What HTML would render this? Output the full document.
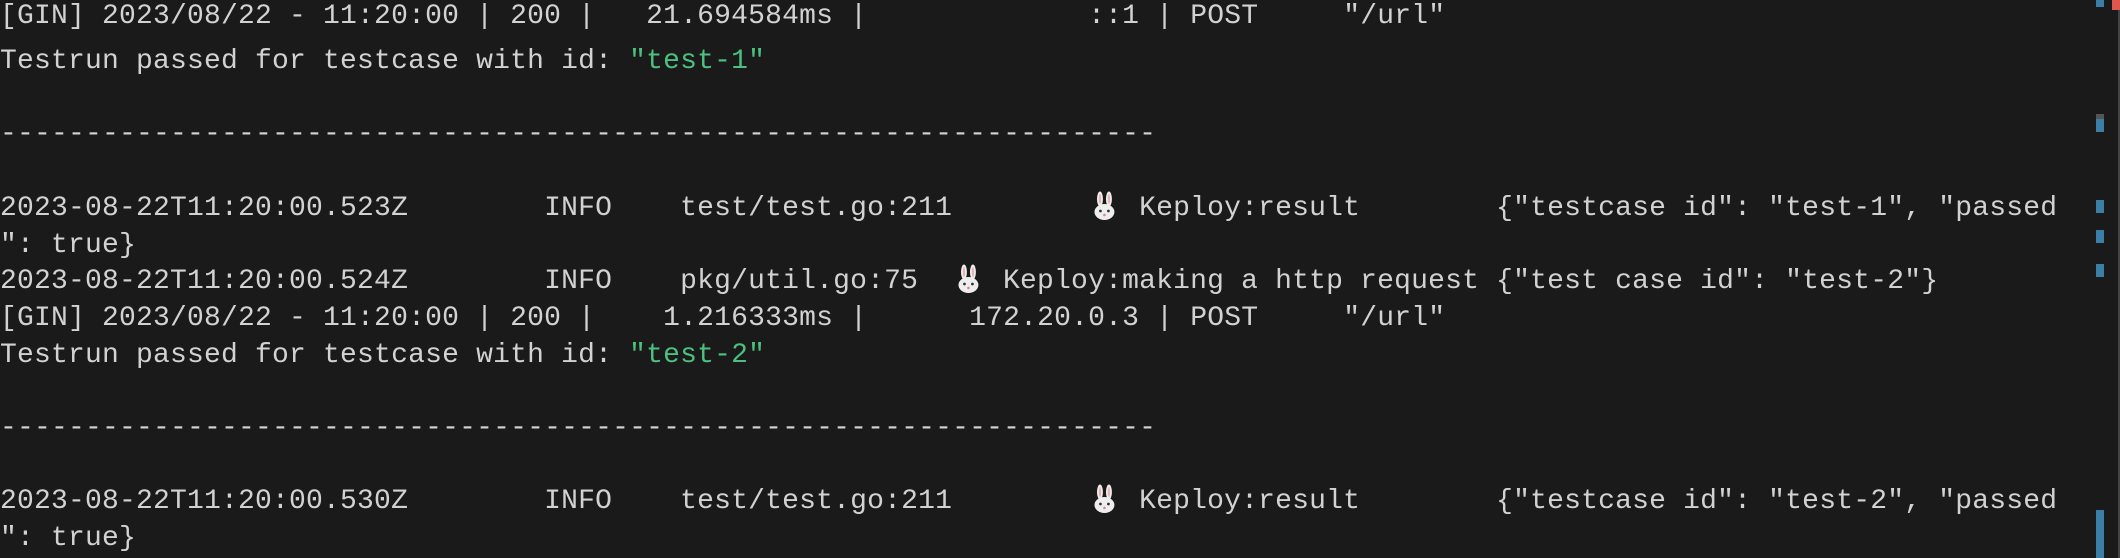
<!DOCTYPE html>
<html><head><meta charset="utf-8"><style>
html,body{margin:0;padding:0;background:#1a1a1a;width:2120px;height:558px;overflow:hidden}
.t{position:absolute;left:0;font-family:"Liberation Mono",monospace;font-size:28px;letter-spacing:0.2px;line-height:36.7px;color:#d2d2d2;white-space:pre;margin:0}
.g{color:#4cc07e}
.r{display:inline-block;width:33.9px;height:30px;vertical-align:-6px}
.m{position:absolute;left:2096px;width:8px;background:#3b7ea6}
</style></head><body>
<pre class="t" style="top:-1px">[GIN] 2023/08/22 - 11:20:00 | 200 |   21.694584ms |             ::1 | POST     "/url"</pre>
<pre class="t" style="top:44px">Testrun passed for testcase with id: <span class="g">"test-1"</span>

--------------------------------------------------------------------

2023-08-22T11:20:00.523Z        INFO    test/test.go:211        <svg class="r" viewBox="0 0 34 30"><ellipse cx="12" cy="8" rx="3" ry="7.5" fill="#eee"/><ellipse cx="21" cy="8" rx="3" ry="7.5" fill="#eee"/><ellipse cx="12" cy="8" rx="1.2" ry="5" fill="#e8b4b8"/><ellipse cx="21" cy="8" rx="1.2" ry="5" fill="#e8b4b8"/><ellipse cx="16.5" cy="21" rx="10" ry="8" fill="#eee"/><circle cx="12.5" cy="20" r="1.4" fill="#333"/><circle cx="20.5" cy="20" r="1.4" fill="#333"/><circle cx="16.5" cy="24" r="1.3" fill="#d88"/></svg> Keploy:result        {"testcase id": "test-1", "passed
": true}
2023-08-22T11:20:00.524Z        INFO    pkg/util.go:75  <svg class="r" viewBox="0 0 34 30"><ellipse cx="12" cy="8" rx="3" ry="7.5" fill="#eee"/><ellipse cx="21" cy="8" rx="3" ry="7.5" fill="#eee"/><ellipse cx="12" cy="8" rx="1.2" ry="5" fill="#e8b4b8"/><ellipse cx="21" cy="8" rx="1.2" ry="5" fill="#e8b4b8"/><ellipse cx="16.5" cy="21" rx="10" ry="8" fill="#eee"/><circle cx="12.5" cy="20" r="1.4" fill="#333"/><circle cx="20.5" cy="20" r="1.4" fill="#333"/><circle cx="16.5" cy="24" r="1.3" fill="#d88"/></svg> Keploy:making a http request {"test case id": "test-2"}
[GIN] 2023/08/22 - 11:20:00 | 200 |    1.216333ms |      172.20.0.3 | POST     "/url"
Testrun passed for testcase with id: <span class="g">"test-2"</span>

--------------------------------------------------------------------

2023-08-22T11:20:00.530Z        INFO    test/test.go:211        <svg class="r" viewBox="0 0 34 30"><ellipse cx="12" cy="8" rx="3" ry="7.5" fill="#eee"/><ellipse cx="21" cy="8" rx="3" ry="7.5" fill="#eee"/><ellipse cx="12" cy="8" rx="1.2" ry="5" fill="#e8b4b8"/><ellipse cx="21" cy="8" rx="1.2" ry="5" fill="#e8b4b8"/><ellipse cx="16.5" cy="21" rx="10" ry="8" fill="#eee"/><circle cx="12.5" cy="20" r="1.4" fill="#333"/><circle cx="20.5" cy="20" r="1.4" fill="#333"/><circle cx="16.5" cy="24" r="1.3" fill="#d88"/></svg> Keploy:result        {"testcase id": "test-2", "passed
": true}</pre>
<div class="m" style="top:0;height:7px"></div>
<div class="m" style="top:114px;height:5px;background:#555"></div>
<div class="m" style="top:119px;height:13px"></div>
<div class="m" style="top:200px;height:13px"></div>
<div class="m" style="top:230px;height:13px"></div>
<div class="m" style="top:264px;height:13px"></div>
<div class="m" style="top:510px;height:48px"></div>
<div style="position:absolute;left:2112px;top:0;width:8px;height:10px;background:#e0574e"></div>
<div style="position:absolute;left:2118px;top:10px;width:2px;height:548px;background:#444"></div>
</body></html>
